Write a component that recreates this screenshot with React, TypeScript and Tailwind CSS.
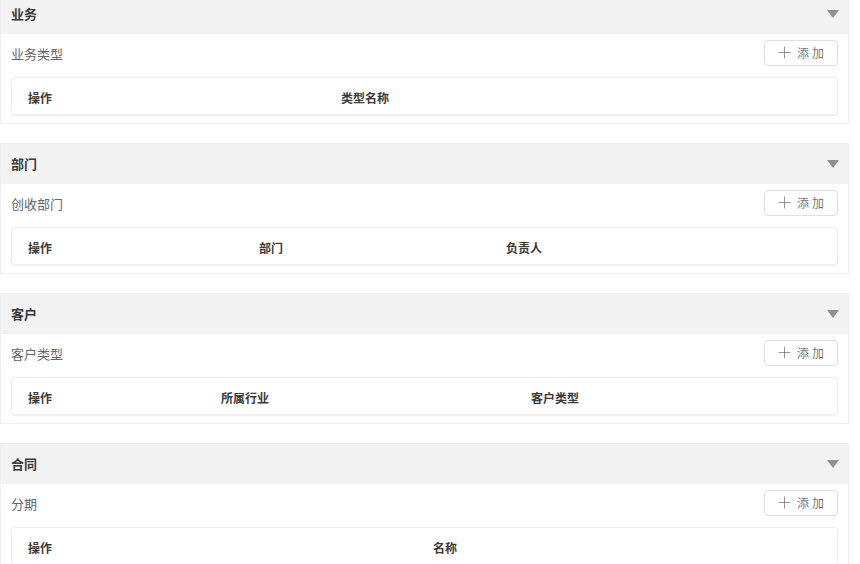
import { Plus } from "lucide-react";

type Column = { title: string; width?: number };

type Section = {
  title: string;
  subtitle: string;
  columns: Column[];
};

const sections: Section[] = [
  {
    title: "业务",
    subtitle: "业务类型",
    columns: [{ title: "操作", width: 313 }, { title: "类型名称" }],
  },
  {
    title: "部门",
    subtitle: "创收部门",
    columns: [{ title: "操作", width: 231 }, { title: "部门", width: 247 }, { title: "负责人" }],
  },
  {
    title: "客户",
    subtitle: "客户类型",
    columns: [{ title: "操作", width: 193 }, { title: "所属行业", width: 310 }, { title: "客户类型" }],
  },
  {
    title: "合同",
    subtitle: "分期",
    columns: [{ title: "操作", width: 405 }, { title: "名称" }],
  },
];

function SettingCard({ section }: { section: Section }) {
  return (
    <div className="w-[849px] border border-[#efefef] bg-white">
      <div className="flex h-[40px] items-center justify-between bg-[#f3f3f3] pl-[10px] pr-[9px]">
        <span className="text-[13px] font-bold text-[#3a3a3a]">{section.title}</span>
        <svg width="12" height="8" viewBox="0 0 12 8">
          <path d="M0 0 H12 L6 8 Z" fill="#909090" />
        </svg>
      </div>
      <div className="px-[10px] pb-[8px]">
        <div className="flex h-[43px] items-center justify-between">
          <span className="-mt-[3px] text-[13px] text-[#666]">{section.subtitle}</span>
          <button className="-mt-[6px] flex h-[26px] w-[74px] items-center justify-center gap-[3px] rounded-[4px] border border-[#dcdfe6] bg-white text-[12px] tracking-[3px] text-[#777]">
            <Plus size={19} strokeWidth={1} color="#777" />
            <span>添加</span>
          </button>
        </div>
        <div className="flex h-[38px] items-center rounded-[4px] border border-[#ebeef5] shadow-[0_1px_2px_rgba(0,0,0,0.08)]">
          {section.columns.map((col, i) => (
            <div
              key={i}
              className={col.width ? "shrink-0 pl-[16px]" : "flex-1 pl-[16px]"}
              style={col.width ? { width: col.width } : undefined}
            >
              <span className="text-[12px] font-bold text-[#3a3a3a]">{col.title}</span>
            </div>
          ))}
        </div>
      </div>
    </div>
  );
}

export default function App() {
  return (
    <div
      className="h-[564px] w-[860px] overflow-hidden bg-white"
      style={{ fontFamily: '"Noto Sans CJK SC", "Noto Sans", sans-serif' }}
    >
      <div className="-mt-[7px] flex flex-col gap-[19px]">
        {sections.map((s) => (
          <SettingCard key={s.title} section={s} />
        ))}
      </div>
    </div>
  );
}
